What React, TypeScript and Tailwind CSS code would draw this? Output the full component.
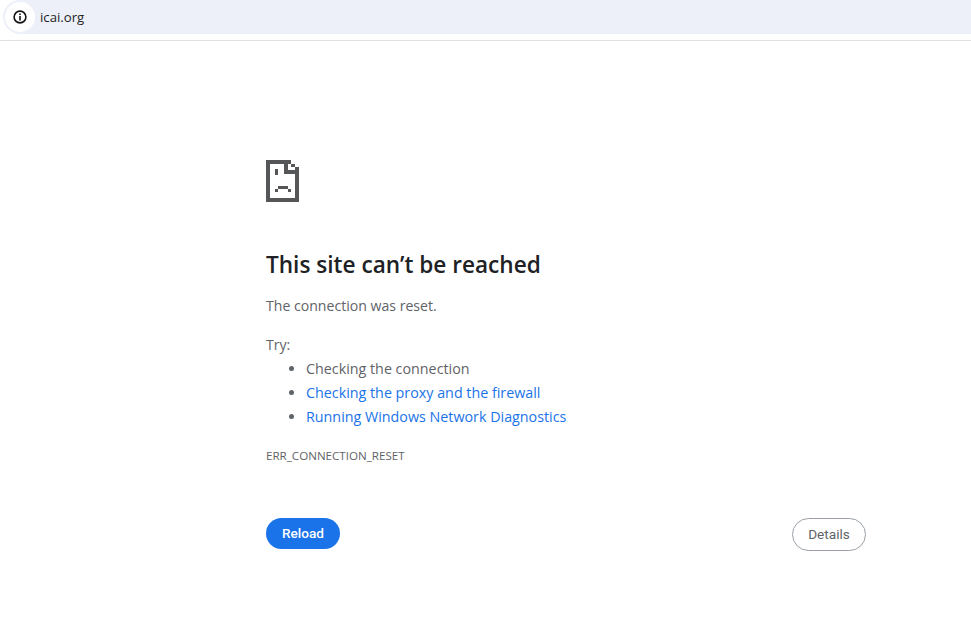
const Sad = () => (
  <svg width="33" height="42" viewBox="0 0 33 42" fill="#555658" shapeRendering="crispEdges" className="block">
    <path d="M0 0H25V4H4V38H29V14H22V10H33V42H0Z" />
    <rect x="18" y="0" width="4" height="14" />
    <rect x="25" y="4" width="4" height="3" />
    <rect x="29" y="7" width="4" height="3" />
    <rect x="9" y="9" width="3" height="6" />
    <path d="M12 26H22V29H25V32H22V29H12V32H9V29H12Z" />
  </svg>
)

const App = () => {
  return (
    <div className="min-h-[638px] bg-white font-['Open_Sans','Noto_Sans',sans-serif] text-[#5f6368]">
      <div className="h-[41px] border-b border-[#e0e0e0]">
        <div className="ml-[3px] flex h-[34px] items-center rounded-l-full bg-[#edf0f9]">
          <div className="ml-[2px] flex h-[30px] w-[30px] items-center justify-center rounded-full bg-white">
            <svg width="14" height="14" viewBox="0 0 14 14" fill="none" stroke="#111" strokeWidth="1.6">
              <circle cx="7" cy="7" r="5.9" />
              <path d="M7 6V10.5M7 3.4V5" />
            </svg>
          </div>
          <span className="ml-[5px] pt-[1px] text-[13.2px] text-[#1f1f1f]">icai.org</span>
        </div>
      </div>

      <div className="ml-[266px] w-[600px] pt-[119px]">
        <Sad />
        <h1 className="mt-[45px] text-[22.6px] leading-[36px] font-semibold text-[#202124]">This site can’t be reached</h1>
        <p className="mt-[11px] text-[14.1px] leading-[24px]">The connection was reset.</p>
        <p className="mt-[15px] text-[14.1px] leading-[24px]">Try:</p>
        <ul className="list-disc pl-[40px] text-[14.3px] leading-[24px] marker:text-[#5f6368]">
          <li>Checking the connection</li>
          <li className="text-[#1a73e8]">Checking the proxy and the firewall</li>
          <li className="text-[#1a73e8]">Running Windows Network Diagnostics</li>
        </ul>
        <div className="mt-[19px] text-[11.6px] leading-[16px]">ERR_CONNECTION_RESET</div>
        <div className="mt-[54px] flex items-start justify-between font-['Roboto',sans-serif] text-[13.6px] font-medium">
          <button className="h-[31px] w-[74px] rounded-full bg-[#1a73e8] text-white">Reload</button>
          <button className="h-[33px] w-[74px] rounded-full border border-[#9aa0a6] font-normal text-[#5f6368]">Details</button>
        </div>
      </div>
    </div>
  )
}

export default App
